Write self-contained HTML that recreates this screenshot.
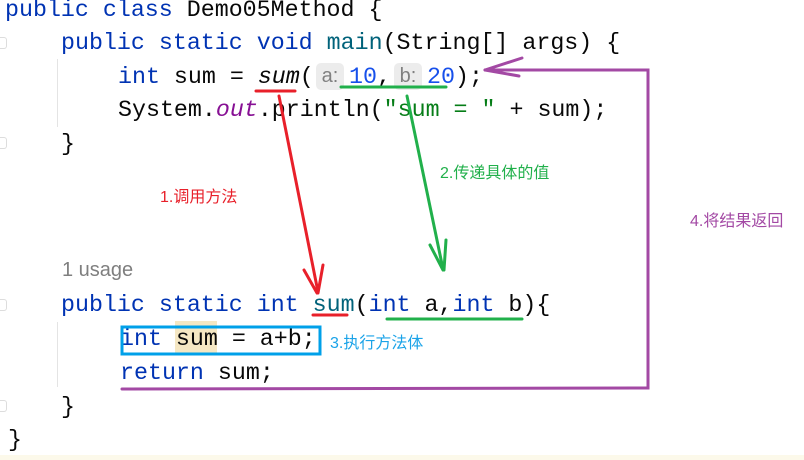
<!DOCTYPE html>
<html><head><meta charset="utf-8">
<style>
html,body{margin:0;padding:0;background:#fff;}
body{width:804px;height:460px;position:relative;overflow:hidden;}
.l{position:absolute;font-family:"Liberation Mono",monospace;font-size:23.3px;line-height:26px;white-space:pre;color:#080808;}
.k{color:#0033b3}
.m{color:#00627a}
.n{color:#1750eb}
.s{color:#067d17}
.o{color:#871094;font-style:italic}
.i{font-style:italic}
.hint{position:absolute;background:#ececec;border-radius:5px;color:#808080;font-family:"Liberation Sans",sans-serif;font-size:20px;line-height:26px;height:27px;}
.cn{position:absolute;font-family:"Liberation Sans","Noto Sans CJK SC",sans-serif;font-size:16px;line-height:18px;white-space:nowrap;}
.g{position:absolute;width:1px;background:#e4e4e4;left:57px;}
.f{position:absolute;left:-2px;width:8px;height:10px;border:1px solid #ddd;border-left:none;border-radius:0 3px 3px 0;}
</style></head><body>
<div class="g" style="top:59px;height:68px"></div>
<div class="g" style="top:322px;height:65px"></div>
<div class="f" style="top:37px"></div>
<div class="f" style="top:137px"></div>
<div class="f" style="top:299px"></div>
<div class="f" style="top:400px"></div>
<div style="position:absolute;left:0;top:455px;width:804px;height:5px;background:#fcf9ea"></div>
<div style="position:absolute;left:175px;top:321px;width:42px;height:33px;background:#f5e7c3"></div>

<div class="l" style="left:5px;top:-3px"><span class="k">public class </span>Demo05Method {</div>
<div class="l" style="left:61px;top:30px"><span class="k">public static void </span><span class="m">main</span>(String[] args) {</div>
<div class="l" style="left:118px;top:64px"><span class="k">int </span>sum = <span class="i">sum</span>(</div>
<div class="hint" style="left:316px;top:63px;width:28px;text-align:center">a:</div>
<div class="l" style="left:349px;top:64px"><span class="n">10</span>,</div>
<div class="hint" style="left:394px;top:63px;width:28px;text-align:center">b:</div>
<div class="l" style="left:427px;top:64px"><span class="n">20</span>);</div>
<div class="l" style="left:118px;top:97px">System.<span class="o">out</span>.println(<span class="s">"sum = "</span> + sum);</div>
<div class="l" style="left:61px;top:131px">}</div>
<div style="position:absolute;left:62px;top:257px;font-family:'Liberation Sans',sans-serif;font-size:20px;color:#7f7f7f;line-height:26px">1 usage</div>
<div class="l" style="left:61px;top:292px"><span class="k">public static int </span><span class="m">sum</span>(<span class="k">int </span>a,<span class="k">int </span>b){</div>
<div class="l" style="left:120px;top:326px"><span class="k">int </span>sum = a+b;</div>
<div class="l" style="left:120px;top:360px"><span class="k">return </span>sum;</div>
<div class="l" style="left:61px;top:394px">}</div>
<div class="l" style="left:8px;top:427px">}</div>

<div class="cn" style="left:160px;top:189px;color:#e8202a">1.调用方法</div>
<div class="cn" style="left:440px;top:165px;color:#21b04b">2.传递具体的值</div>
<div class="cn" style="left:330px;top:335px;color:#1aa3e8">3.执行方法体</div>
<div class="cn" style="left:690px;top:213px;color:#a349a4">4.将结果返回</div>

<svg width="804" height="460" style="position:absolute;left:0;top:0" fill="none" stroke-linecap="round">
<g stroke="#e8202a" stroke-width="3">
<line x1="256" y1="91" x2="295" y2="91"/>
<line x1="279" y1="96" x2="318" y2="292"/>
<line x1="304" y1="270" x2="317" y2="293"/>
<line x1="323" y1="265" x2="318" y2="293"/>
<line x1="313" y1="315" x2="347" y2="315"/>
</g>
<g stroke="#21b04b" stroke-width="3">
<line x1="341" y1="87" x2="446" y2="87"/>
<line x1="407" y1="96" x2="443" y2="269"/>
<line x1="430" y1="245" x2="443" y2="270"/>
<line x1="446" y1="240" x2="444" y2="270"/>
<line x1="387" y1="319" x2="522" y2="319"/>
</g>
<rect x="122" y="327" width="198" height="27" stroke="#00a0e9" stroke-width="3"/>
<g stroke="#a349a4" stroke-width="3">
<polyline points="485,70 648,70 648,388 122,389"/>
<line x1="485" y1="70" x2="522" y2="58"/>
<line x1="485" y1="70" x2="519" y2="76"/>
</g>
</svg>
</body></html>
